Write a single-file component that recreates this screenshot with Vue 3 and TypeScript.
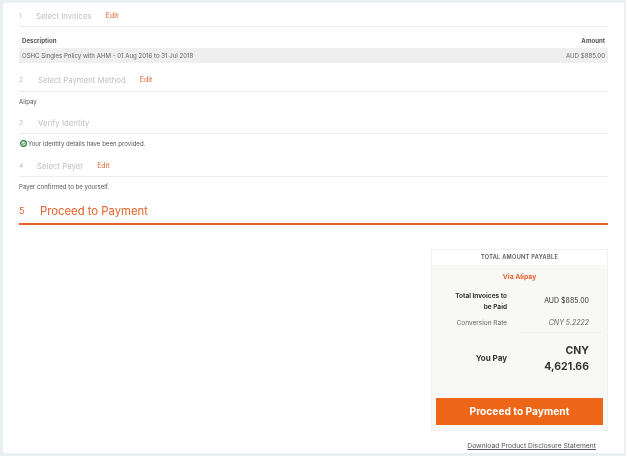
<script setup lang="ts">
const steps = [
  { num: 1, title: 'Select Invoices', gap: 'first' },
  { num: 2, title: 'Select Payment Method', gap: 'second' },
  { num: 3, title: 'Verify Identity', gap: 'third' },
  { num: 4, title: 'Select Payer', gap: 'fourth' },
]
</script>

<template>
  <div class="page">
    <main class="card">
      <section class="step" :class="steps[0].gap">
        <header class="step-head">
          <span class="num">{{ steps[0].num }}</span>
          <span class="title">{{ steps[0].title }}</span>
          <a class="edit">Edit</a>
        </header>
        <div class="invoice-head">
          <span>Description</span>
          <span>Amount</span>
        </div>
        <div class="invoice-row">
          <span>OSHC Singles Policy with AHM - 01 Aug 2016 to 31 Jul 2018</span>
          <span>AUD $885.00</span>
        </div>
      </section>

      <section class="step" :class="steps[1].gap">
        <header class="step-head">
          <span class="num">{{ steps[1].num }}</span>
          <span class="title">{{ steps[1].title }}</span>
          <a class="edit">Edit</a>
        </header>
        <p class="note">Alipay</p>
      </section>

      <section class="step" :class="steps[2].gap">
        <header class="step-head">
          <span class="num">{{ steps[2].num }}</span>
          <span class="title">{{ steps[2].title }}</span>
        </header>
        <p class="note with-icon">
          <svg width="7" height="7" viewBox="0 0 8 8">
            <circle cx="4" cy="4" r="3.2" fill="none" stroke="#1f7a38" stroke-width="1.4" />
            <path d="M2.4 4.1 3.6 5.2 5.6 3" fill="none" stroke="#1f7a38" stroke-width="1.1" />
          </svg>
          Your identity details have been provided.
        </p>
      </section>

      <section class="step" :class="steps[3].gap">
        <header class="step-head">
          <span class="num">{{ steps[3].num }}</span>
          <span class="title">{{ steps[3].title }}</span>
          <a class="edit">Edit</a>
        </header>
        <p class="note">Payer confirmed to be yourself.</p>
      </section>

      <header class="active-head">
        <span class="active-num">5</span>
        <span class="active-title">Proceed to Payment</span>
      </header>

      <div class="summary-wrap">
        <aside class="summary">
          <h2 class="summary-title">TOTAL AMOUNT PAYABLE</h2>
          <div class="summary-body">
            <div class="via">Via Alipay</div>
            <div class="line">
              <strong class="label">Total Invoices to be Paid</strong>
              <span class="value">AUD $885.00</span>
            </div>
            <div class="line rate">
              <span class="label">Conversion Rate</span>
              <em class="value">CNY 5.2222</em>
            </div>
            <div class="line pay">
              <strong class="label">You Pay</strong>
              <strong class="value total">CNY 4,621.66</strong>
            </div>
            <button class="proceed">Proceed to Payment</button>
          </div>
        </aside>
        <a class="download">Download Product Disclosure Statement</a>
      </div>
    </main>
  </div>
</template>

<style>
html,
body {
  margin: 0;
  background: #e9f0f4;
}
</style>

<style scoped>
.page {
  width: 626px;
  height: 456px;
  padding: 3px 2px 3px 3px;
  box-sizing: border-box;
  overflow: hidden;
  font-family: "Inter", "Liberation Sans", sans-serif;
  color: #444;
}

/* the reference is a soft, downscaled capture */
.card {
  height: 100%;
  box-sizing: border-box;
  padding: 0 16px;
  background: #fff;
  filter: blur(0.3px);
}

.step-head {
  display: flex;
  align-items: center;
  box-sizing: border-box;
  height: 22px;
  border-bottom: 1px solid #ececec;
  font-size: 7.8px;
  color: #c0c0c0;
}

.first .step-head {
  height: 24px;
  padding-top: 2px;
}

.second {
  margin-top: 4px;
}

.second .step-head {
  height: 25px;
  padding-top: 1px;
}

.fourth .step-head {
  height: 23px;
  padding-top: 1px;
}

.num {
  width: 17px;
  font-size: 6.5px;
}

.second .num,
.third .num {
  width: 19px;
}

.fourth .num {
  width: 18px;
}

.edit {
  margin-left: 14px;
  font-size: 7px;
  color: #e4622a;
}

.invoice-head,
.invoice-row {
  display: flex;
  justify-content: space-between;
  padding: 0 3px;
  font-size: 6.1px;
}

.invoice-head {
  height: 21px;
  align-items: flex-end;
  padding-bottom: 4px;
  box-sizing: border-box;
  font-weight: 700;
  color: #555;
}

.invoice-row {
  height: 15px;
  align-items: center;
  background: #efefef;
  color: #666;
}

.note {
  display: flex;
  align-items: center;
  gap: 1px;
  box-sizing: border-box;
  height: 20px;
  padding-bottom: 1px;
  margin: 0;
  font-size: 6.1px;
  color: #555;
}

.with-icon svg {
  margin-left: 1px;
}

.active-head {
  display: flex;
  align-items: center;
  box-sizing: border-box;
  height: 28px;
  padding-top: 1px;
  border-bottom: 2px solid #e4622a;
  color: #e4622a;
}

.active-num {
  width: 21px;
  font-size: 9px;
}

.active-title {
  font-size: 11.3px;
}

.summary-wrap {
  display: flex;
  flex-direction: column;
  align-items: flex-end;
  margin-top: 24px;
}

.summary {
  width: 177px;
  box-sizing: border-box;
  border: 1px solid #f0f0f0;
}

.summary-title {
  height: 15px;
  margin: 0;
  font-size: 5.6px;
  font-weight: 600;
  line-height: 15px;
  letter-spacing: 0.3px;
  text-align: center;
  color: #555;
}

.summary-body {
  padding: 0 4px 5px;
  background: #f8f8f7;
}

.via {
  padding: 7px 0 10px;
  font-size: 6.8px;
  font-weight: 700;
  line-height: 9px;
  text-align: center;
  color: #e4622a;
}

.line {
  display: grid;
  grid-template-columns: 57px 1fr;
  column-gap: 13px;
  align-items: center;
  padding-left: 14px;
  font-size: 6.5px;
  line-height: 10.5px;
  color: #333;
}

.label {
  text-align: right;
}

.value {
  padding: 0 14px 0 7px;
  text-align: right;
  font-size: 7px;
}

.rate {
  align-items: start;
  margin-top: 6px;
  color: #666;
}

.rate .value {
  padding-bottom: 3px;
  border-bottom: 1px solid #f1f1f0;
}

.pay {
  padding: 10px 0 23px 14px;
}

.pay .label {
  font-size: 8px;
}

.total {
  font-size: 10.5px;
  line-height: 16px;
}

.proceed {
  display: block;
  width: 100%;
  height: 27px;
  border: 0;
  padding: 0;
  background: #ed6516;
  font: inherit;
  font-size: 10.2px;
  font-weight: 700;
  color: #fff;
}

.download {
  margin: 10px 12px 0 0;
  font-size: 6.75px;
  text-decoration: underline;
  color: #555;
}
</style>
